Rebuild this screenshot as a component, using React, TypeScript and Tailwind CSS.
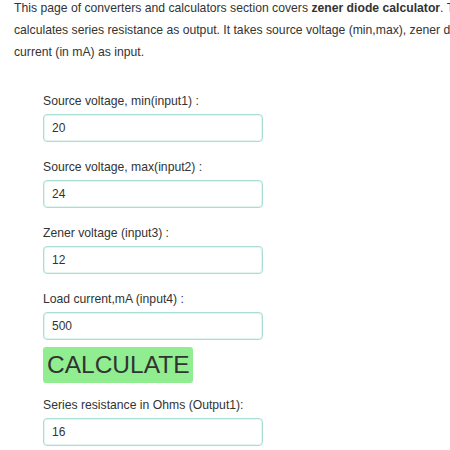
import React from "react"

const fields = [
  { label: "Source voltage, min(input1) :", value: "20" },
  { label: "Source voltage, max(input2) :", value: "24" },
  { label: "Zener voltage (input3) :", value: "12" },
  { label: "Load current,mA (input4) :", value: "500" },
]

function Field({ label, value }: { label: string; value: string }) {
  return (
    <div className="flex flex-col">
      <label className="text-[12.2px] leading-[18px] text-[#333]">{label}</label>
      <input
        readOnly
        value={value}
        className="mt-[4px] w-[220px] h-[28px] px-[8px] text-[12px] text-[#333] border border-[#aadfd5] rounded-[4px] outline-none bg-white shadow-[inset_0_0_0_1px_#e2f5f1]"
      />
    </div>
  )
}

export default function App() {
  return (
    <div className="w-[450px] h-[450px] overflow-hidden bg-white" style={{ fontFamily: '"Liberation Sans", Arial, sans-serif' }}>
      <p className="w-[572px] -mt-[3px] pl-[14px] text-[12.2px] leading-[22px] text-[#333]">
        This page of converters and calculators section covers <b>zener diode calculator</b>. The calculator
        calculates series resistance as output. It takes source voltage (min,max), zener diode voltage and load
        current (in mA) as input.
      </p>

      <div className="pl-[43px] pt-[29px] flex flex-col">
        <div className="flex flex-col gap-[16px]">
          {fields.map((f) => (
            <Field key={f.label} label={f.label} value={f.value} />
          ))}
        </div>

        <button className="mt-[7px] w-[150px] h-[36px] bg-[#90ee90] rounded-[3px] text-[24.5px] leading-[36px] text-[#333] text-left pl-[4px]">
          CALCULATE
        </button>

        <div className="mt-[13px]">
          <Field label="Series resistance in Ohms (Output1):" value="16" />
        </div>
      </div>
    </div>
  )
}
